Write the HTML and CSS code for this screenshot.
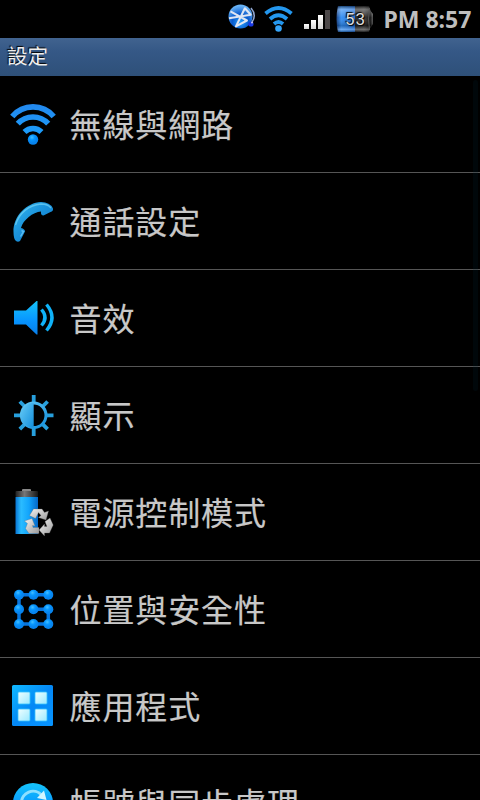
FILE: index.html
```html
<!DOCTYPE html>
<html lang="zh-Hant">
<head>
<meta charset="utf-8">
<title>設定</title>
<link rel="stylesheet" href="styles.css">
</head>
<body>
<svg class="defs" width="0" height="0" aria-hidden="true">
  <defs>
    <linearGradient id="arc" x1="0" y1="28" x2="0" y2="70" gradientUnits="userSpaceOnUse"><stop offset="0" stop-color="#2388ee"/><stop offset="1" stop-color="#19a5ff"/></linearGradient>
    <linearGradient id="phone" x1="0" y1="0" x2="1" y2="1"><stop offset="0" stop-color="#35b9ef"/><stop offset=".45" stop-color="#1b93db"/><stop offset="1" stop-color="#0874c6"/></linearGradient>
    <linearGradient id="cyan" x1="0" y1="0" x2="0" y2="1"><stop offset="0" stop-color="#16c4fa"/><stop offset=".6" stop-color="#0794ff"/><stop offset="1" stop-color="#087eea"/></linearGradient>
    <linearGradient id="sun" x1="0" y1="0" x2="1" y2="1"><stop offset="0" stop-color="#64c9f5"/><stop offset="1" stop-color="#148fdc"/></linearGradient>
    <linearGradient id="cell"><stop offset="0" stop-color="#0874d2"/><stop offset=".25" stop-color="#2bbcff"/><stop offset=".6" stop-color="#12a4fc"/><stop offset="1" stop-color="#0567c7"/></linearGradient>
    <linearGradient id="cap"><stop offset="0" stop-color="#222"/><stop offset=".4" stop-color="#777"/><stop offset="1" stop-color="#161616"/></linearGradient>
    <linearGradient id="silver" x1="0" y1="0" x2="1" y2="1"><stop offset="0" stop-color="#f4f4f4"/><stop offset="1" stop-color="#9a9a9a"/></linearGradient>
    <radialGradient id="node" cx=".4" cy=".3"><stop offset="0" stop-color="#45bfff"/><stop offset=".5" stop-color="#0797ff"/><stop offset="1" stop-color="#0784ee"/></radialGradient>
    <linearGradient id="tile" x1="0" y1="0" x2="1" y2="1"><stop offset="0" stop-color="#10b9ff"/><stop offset=".5" stop-color="#0488f5"/><stop offset="1" stop-color="#0794ff"/></linearGradient>
    <linearGradient id="pane" x1="0" y1="0" x2="1" y2="1"><stop offset="0" stop-color="#f0ffff"/><stop offset="1" stop-color="#9be9ff"/></linearGradient>
    <radialGradient id="orb" cx=".5" cy=".75" r=".7"><stop offset="0" stop-color="#2aa5ff"/><stop offset=".5" stop-color="#0758cc"/><stop offset="1" stop-color="#68b3f5"/></radialGradient>
    <linearGradient id="bars" x1="0" y1="0" x2="0" y2="1"><stop offset="0" stop-color="#fff"/><stop offset="1" stop-color="#d5d5d5"/></linearGradient>
    <linearGradient id="charge"><stop offset="0" stop-color="#123d83"/><stop offset=".25" stop-color="#318df2"/><stop offset="1" stop-color="#1768d5"/></linearGradient>
    <linearGradient id="empty"><stop offset="0" stop-color="#222"/><stop offset=".5" stop-color="#353535"/><stop offset=".85" stop-color="#0c0c0c"/><stop offset="1" stop-color="#555"/></linearGradient>
    <linearGradient id="gloss" x1="0" y1="0" x2="0" y2="1"><stop offset="0" stop-color="#000" stop-opacity=".5"/><stop offset=".14" stop-color="#fff" stop-opacity=".35"/><stop offset=".45" stop-color="#fff" stop-opacity=".05"/><stop offset=".75" stop-color="#000" stop-opacity=".2"/><stop offset=".9" stop-color="#fff" stop-opacity=".3"/><stop offset="1" stop-color="#000" stop-opacity=".4"/></linearGradient>
  </defs>
</svg>

<header class="status">
  <svg class="status-icons" width="110" height="38" viewBox="0 0 110 38">
    <circle cx="20.500" cy="16.500" r="12" fill="url(#orb)"/>
    <path d="M9.500 13.500L27.500 19L18 27L23 7.500L30 12.500L9.500 20.500" transform="rotate(12 20 17)" fill="none" stroke="#dfe6f3" stroke-width="2.100" stroke-linejoin="round"/>
    <path d="M31 8q6 7 1 14" fill="none" stroke="#91a6d0" stroke-width="1.500"/>
    <circle cx="31" cy="24" r="2.600" fill="#1939e5"/><circle cx="32" cy="22.500" r="1" fill="#cce"/>
    <g fill="none" stroke="#2497ee" stroke-width="3.800"><path d="M45.500 13.500Q58.500 2.500 71.500 13.500"/><path d="M50 19Q58.500 11.500 67 19"/><path d="M54 24Q58.500 20 63 24"/></g>
    <circle cx="58.500" cy="28.500" r="3.300" fill="#35a5fa"/>
    <g fill="url(#bars)"><rect x="84" y="24" width="5" height="5"/><rect x="91" y="20" width="5" height="9"/><rect x="98" y="15" width="5" height="14"/></g>
    <rect x="105" y="10" width="5" height="19" fill="#4c4849"/>
  </svg>
  <div class="battery">
    <svg class="battery-shell" viewBox="0 0 38 26">
      <path d="M2 0H19V26H2Q-1 13 2 0Z" fill="url(#charge)"/>
      <path d="M19 0H33Q34 5 37 8V18Q34 21 33 26H19Z" fill="url(#empty)"/>
      <path d="M2 0H33Q34 5 37 8V18Q34 21 33 26H2Q-1 13 2 0Z" fill="url(#gloss)"/>
      <path d="M33.500 2Q31.500 13 33.500 24" fill="none" stroke="#555" stroke-width="1"/>
    </svg>
    <span class="battery-level">53</span>
  </div>
  <span class="clock">PM 8:57</span>
</header>
<h1 class="title">設定</h1>

<main class="list">
  <div class="row">
    <svg class="icon" viewBox="0 0 66 96">
      <g fill="none" stroke="url(#arc)" stroke-width="5.600"><path d="M12.300 40.500A27 27 0 0 1 53.700 40.500"/><path d="M17.800 47.700A20.500 20.500 0 0 1 48.200 47.700"/><path d="M24.500 56A12 12 0 0 1 41.500 56"/></g>
      <circle cx="33" cy="63.500" r="5.200" fill="url(#node)"/>
    </svg><span class="label">無線與網路</span>
  </div>
  <div class="row">
    <svg class="icon" viewBox="0 0 66 96">
      <path d="M13.500 59C13 43 27 29.500 41 29Q50 29 53 35.500Q53.500 38 50.500 39L43.500 42.500Q40.500 42.500 41 38.500C33 39 23 47 21 55Q25 56 25 58.500L20 68Q18 69.500 16 68Q13.500 66 13.500 59Z" fill="url(#phone)"/>
      <path d="M15.500 52C19 40 29 32 41 31Q48 31 51 35" fill="none" stroke="#80dcfa" stroke-width="1.400" opacity=".6"/>
      <path d="M21.500 57.500l2 1-3 5" fill="none" stroke="#5bbcf1" stroke-width="1.400"/>
    </svg><span class="label">通話設定</span>
  </div>
  <div class="row">
    <svg class="icon" viewBox="0 0 66 96">
      <path d="M14 40.500H26L36.500 31h1v33.500h-1L26 54.500H14Z" fill="url(#cyan)"/>
      <g fill="none" stroke="#0fb2f8" stroke-width="3.400"><path d="M41.500 39.500Q48.500 47.500 41.500 55.500"/><path d="M46.500 34.500Q57.500 47.500 46.500 60.500"/></g>
    </svg><span class="label">音效</span>
  </div>
  <div class="row">
    <svg class="icon" viewBox="0 0 66 96">
      <path d="M33.700 28v8M33.700 61v8M14 48.300h8M45.500 48.300h8M19.800 34.500l5 5M42.600 57.200l5 5M47.600 34.500l-5 5M24.800 57.200l-5 5" stroke="#279fdc" stroke-width="3.800"/>
      <circle cx="33.700" cy="48.300" r="12.300" fill="#000" stroke="url(#sun)" stroke-width="3"/>
      <path d="M33.700 36a12.300 12.300 0 0 0 0 24.600Z" fill="url(#sun)"/>
    </svg><span class="label">顯示</span>
  </div>
  <div class="row">
    <svg class="icon" viewBox="0 0 66 96">
      <rect x="22" y="25" width="9" height="3" rx="1" fill="#888"/><rect x="15.500" y="27" width="22.500" height="6" rx="1" fill="url(#cap)"/><rect x="15.500" y="33" width="22.500" height="37" fill="url(#cell)"/>
      <g fill="url(#silver)" stroke="#666" stroke-width=".3"><path d="M29.500 51.500L33.500 45H42L44.500 48.500L48.500 47L46 56L38.500 53.500L41 51.500L38.500 48.500L35.500 54.500Z"/><path d="M45 57.500L50 54L53.200 61L49.500 69H44.500V72L39 66L44.500 60V62.500H47Z"/><path d="M24.500 57L32 54.500L35 62L32.500 61.500L33 63.500H39V69.500H29L25.500 64.500L27.500 59.500Z"/></g>
    </svg><span class="label">電源控制模式</span>
  </div>
  <div class="row">
    <svg class="icon" viewBox="0 0 66 96">
      <path d="M48.300 33.700H19V63H48.300V48.300H33.300" fill="none" stroke="#0875dd" stroke-width="3.500"/>
      <g fill="url(#node)"><circle cx="19" cy="33.700" r="5"/><circle cx="33.500" cy="33.700" r="5"/><circle cx="48.300" cy="33.700" r="5"/><circle cx="19" cy="48.300" r="5"/><circle cx="33.500" cy="48.300" r="5"/><circle cx="48.300" cy="48.300" r="5"/><circle cx="19" cy="63" r="5"/><circle cx="33.500" cy="63" r="5"/><circle cx="48.300" cy="63" r="5"/></g>
    </svg><span class="label">位置與安全性</span>
  </div>
  <div class="row">
    <svg class="icon" viewBox="0 0 66 96">
      <rect x="12" y="27" width="41" height="41" rx="1.500" fill="url(#tile)"/>
      <g fill="url(#pane)" stroke="#35c2fc" stroke-width=".8"><rect x="18" y="34" width="12" height="12" rx="1"/><rect x="35" y="34" width="12" height="12" rx="1"/><rect x="18" y="51" width="12" height="12" rx="1"/><rect x="35" y="51" width="12" height="12" rx="1"/></g>
    </svg><span class="label">應用程式</span>
  </div>
  <div class="row">
    <svg class="icon" viewBox="0 0 66 96">
      <circle cx="33" cy="48" r="20" fill="url(#cyan)"/>
      <path d="M21.500 48A11.500 11.500 0 0 1 41.500 40M44.500 49A11.500 11.500 0 0 1 24.500 57" fill="none" stroke="#8ee0ff" stroke-width="3"/>
      <path d="M44 35.500L46.500 45L37 43Z" fill="#d2f6ff"/><path d="M22 61L19.500 51L29 54Z" fill="#d2f6ff"/>
    </svg><span class="label">帳號與同步處理</span>
  </div>
  <div class="scrollbar"></div>
</main>
</body>
</html>
```
FILE: styles.css
```css
* { box-sizing: border-box; }
html, body { height: 100%; }
body {
  margin: 0;
  display: flex;
  flex-direction: column;
  overflow: hidden;
  background: #000;
  color: #c8c8c8;
  font-family: "Noto Sans", "Noto Sans CJK TC", sans-serif;
}
.defs { position: absolute; }
.status {
  flex: none;
  display: flex;
  align-items: center;
  height: 38px;
  padding-left: 220px;
}
.status-icons { flex: none; }
.battery {
  flex: none;
  display: grid;
  width: 38px;
  height: 26px;
  margin-left: 6px;
}
.battery-shell, .battery-level { grid-area: 1 / 1; }
.battery-shell { width: 38px; height: 26px; }
.battery-level {
  z-index: 1;
  padding-left: 9px;
  font: 17px/26px Roboto, sans-serif;
  letter-spacing: 1px;
  color: #ddd;
  text-shadow: 1px 1px 1px #000, -1px -1px 1px #000;
}
.clock {
  margin-left: 9.5px;
  font-size: 23px;
  line-height: 38px;
  font-weight: 700;
  color: #bebebe;
  white-space: nowrap;
}
.title {
  flex: none;
  height: 38px;
  margin: 0;
  padding-left: 7px;
  background: linear-gradient(#41638f, #355886 35%, #2e5079);
  font-size: 20.5px;
  line-height: 36px;
  font-weight: 400;
  color: #eee;
  text-shadow: -1px -1px 1px #000;
}
.list { position: relative; flex: 1; min-height: 0; overflow: hidden; }
.row {
  display: flex;
  height: 97px;
  border-bottom: 1px solid #555;
}
.icon { flex: none; width: 66px; height: 96px; }
.label {
  margin-left: 3.5px;
  font-size: 32px;
  letter-spacing: .9px;
  line-height: 97px;
  white-space: nowrap;
  -webkit-text-stroke: .2px #c8c8c8;
}
.scrollbar {
  position: absolute;
  top: 4px;
  right: 2px;
  width: 5px;
  height: 311px;
  border-radius: 3px;
  background: rgba(0, 40, 60, .17);
}
```
